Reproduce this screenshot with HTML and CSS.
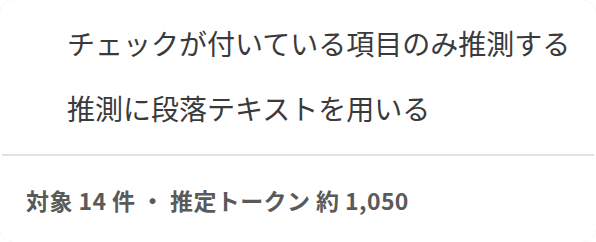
FILE: index.html
```html
<!DOCTYPE html>
<html lang="ja">
<head>
<meta charset="utf-8">
<link rel="stylesheet" href="styles.css">
</head>
<body>
<div class="card">
  <ul class="options">
    <li class="option">チェックが付いている項目のみ推測する</li>
    <li class="option">推測に段落テキストを用いる</li>
  </ul>
  <div class="divider"></div>
  <div class="footer">対象 14 件 ・ 推定トークン 約 1,050</div>
</div>
</body>
</html>
```
FILE: styles.css
```css
html, body {
  margin: 0;
  padding: 0;
  background: #ffffff;
}
body {
  font-family: "Noto Sans CJK JP", "Noto Sans", sans-serif;
  width: 596px;
  height: 242px;
  overflow: hidden;
}
.card {
  box-sizing: border-box;
  width: 596px;
  height: 242px;
  background: #ffffff;
  border-radius: 14px;
  box-shadow: 0 0 1px rgba(0,0,0,0.12);
  padding-top: 10px;
}
.options {
  list-style: none;
  margin: 0;
  padding: 0 0 0 67px;
}
.option {
  height: 65px;
  display: flex;
  align-items: center;
  font-size: 28px;
  color: #3a3a3a;
  letter-spacing: 0;
}
.divider {
  margin: 14px 2px 0 2px;
  height: 2px;
  background: #e2e2e2;
}
.footer {
  padding-left: 26px;
  height: 88px;
  display: flex;
  align-items: center;
  font-size: 23px;
  font-weight: 700;
  letter-spacing: 0.4px;
  color: #5a5a5a;
  font-family: "Noto Sans CJK JP", sans-serif;
}
```
